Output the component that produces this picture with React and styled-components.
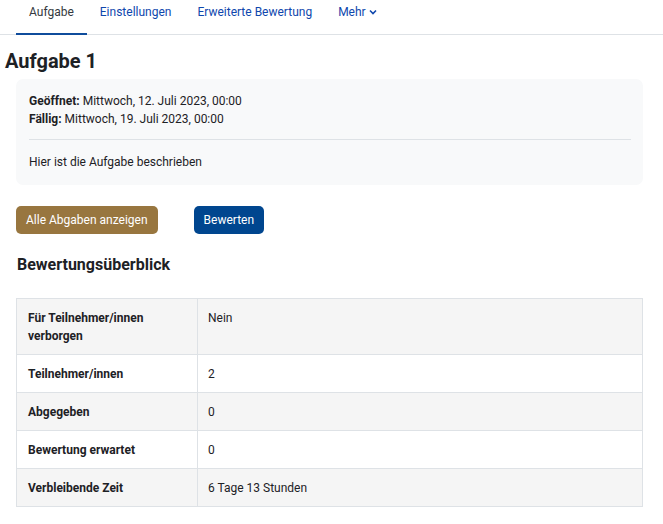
import React from "react";
import styled, { createGlobalStyle } from "styled-components";

const Global = createGlobalStyle`
  html, body { margin: 0; padding: 0; background: #fff; }
  body {
    font-family: Roboto, "Liberation Sans", sans-serif;
    color: #1d2125;
    font-size: 13px;
  }
`;

const Page = styled.div`
  width: 663px;
`;

const Nav = styled.nav`
  display: flex;
  padding-left: 16px;
  border-bottom: 1px solid #dee2e6;
  height: 35px;
  box-sizing: border-box;
`;

const Tab = styled.a`
  display: flex;
  align-items: flex-start;
  gap: 3px;
  padding: 4px 13px 0;
  font-size: 12px;
  line-height: 16px;
  color: ${(p) => (p.$active ? "#343a40" : "#0f47ad")};
  border-bottom: 2px solid ${(p) => (p.$active ? "#0f4c9c" : "transparent")};
  margin-bottom: -1px;
  text-decoration: none;
  cursor: pointer;
`;

const Chevron = styled.svg`
  width: 8px;
  height: 8px;
  margin-top: 4px;
`;

const Content = styled.main`
  padding: 0 20px 0 16px;
`;

const Title = styled.h2`
  margin: 14px 0 0 -11px;
  font-size: 20px;
  line-height: 24px;
  font-weight: 700;
`;

const InfoBox = styled.section`
  margin-top: 6px;
  background: #f8f9fa;
  border-radius: 7px;
  padding: 13px 12px 14px 13px;
`;

const DateLine = styled.div`
  font-size: 12px;
  line-height: 18px;
  b { font-weight: 700; }
`;

const Divider = styled.hr`
  border: 0;
  border-top: 1px solid #dee2e6;
  margin: 11px 0 13px;
`;

const Description = styled.p`
  margin: 0;
  font-size: 12px;
  line-height: 18px;
`;

const Actions = styled.div`
  display: flex;
  gap: 36px;
  margin-top: 21px;
`;

const Button = styled.button`
  height: 28px;
  padding: 0 10px;
  border: 0;
  border-radius: 5px;
  font-family: inherit;
  font-size: 12px;
  color: #fff;
  background: ${(p) => (p.$variant === "primary" ? "#00468f" : "#98763f")};
  cursor: pointer;
`;

const SectionTitle = styled.h3`
  margin: 21px 0 0 1px;
  font-size: 16px;
  line-height: 20px;
  font-weight: 700;
`;

const Table = styled.table`
  width: 100%;
  margin-top: 23px;
  border-collapse: collapse;
  font-size: 12px;
  line-height: 18px;
`;

const Row = styled.tr`
  background: ${(p) => (p.$striped ? "#f5f5f5" : "#fff")};
`;

const Head = styled.th`
  width: 158px;
  text-align: left;
  vertical-align: top;
  font-weight: 700;
  padding: 10px 11px 9px;
  border: 1px solid #dee2e6;
`;

const Cell = styled.td`
  vertical-align: top;
  padding: 10px 10px 9px;
  border: 1px solid #dee2e6;
`;

const rows = [
  ["Für Teilnehmer/innen verborgen", "Nein"],
  ["Teilnehmer/innen", "2"],
  ["Abgegeben", "0"],
  ["Bewertung erwartet", "0"],
  ["Verbleibende Zeit", "6 Tage 13 Stunden"],
];

export default function App() {
  return (
    <Page>
      <Global />
      <Nav>
        <Tab $active>Aufgabe</Tab>
        <Tab>Einstellungen</Tab>
        <Tab>Erweiterte Bewertung</Tab>
        <Tab>
          Mehr
          <Chevron viewBox="0 0 8 8">
            <path d="M1 2.5 L4 5.5 L7 2.5" fill="none" stroke="currentColor" strokeWidth="1.6" />
          </Chevron>
        </Tab>
      </Nav>
      <Content>
        <Title>Aufgabe 1</Title>
        <InfoBox>
          <DateLine><b>Geöffnet:</b> Mittwoch, 12. Juli 2023, 00:00</DateLine>
          <DateLine><b>Fällig:</b> Mittwoch, 19. Juli 2023, 00:00</DateLine>
          <Divider />
          <Description>Hier ist die Aufgabe beschrieben</Description>
        </InfoBox>
        <Actions>
          <Button>Alle Abgaben anzeigen</Button>
          <Button $variant="primary">Bewerten</Button>
        </Actions>
        <SectionTitle>Bewertungsüberblick</SectionTitle>
        <Table>
          <tbody>
            {rows.map(([k, v], i) => (
              <Row key={k} $striped={i % 2 === 0}>
                <Head>{k}</Head>
                <Cell>{v}</Cell>
              </Row>
            ))}
          </tbody>
        </Table>
      </Content>
    </Page>
  );
}
